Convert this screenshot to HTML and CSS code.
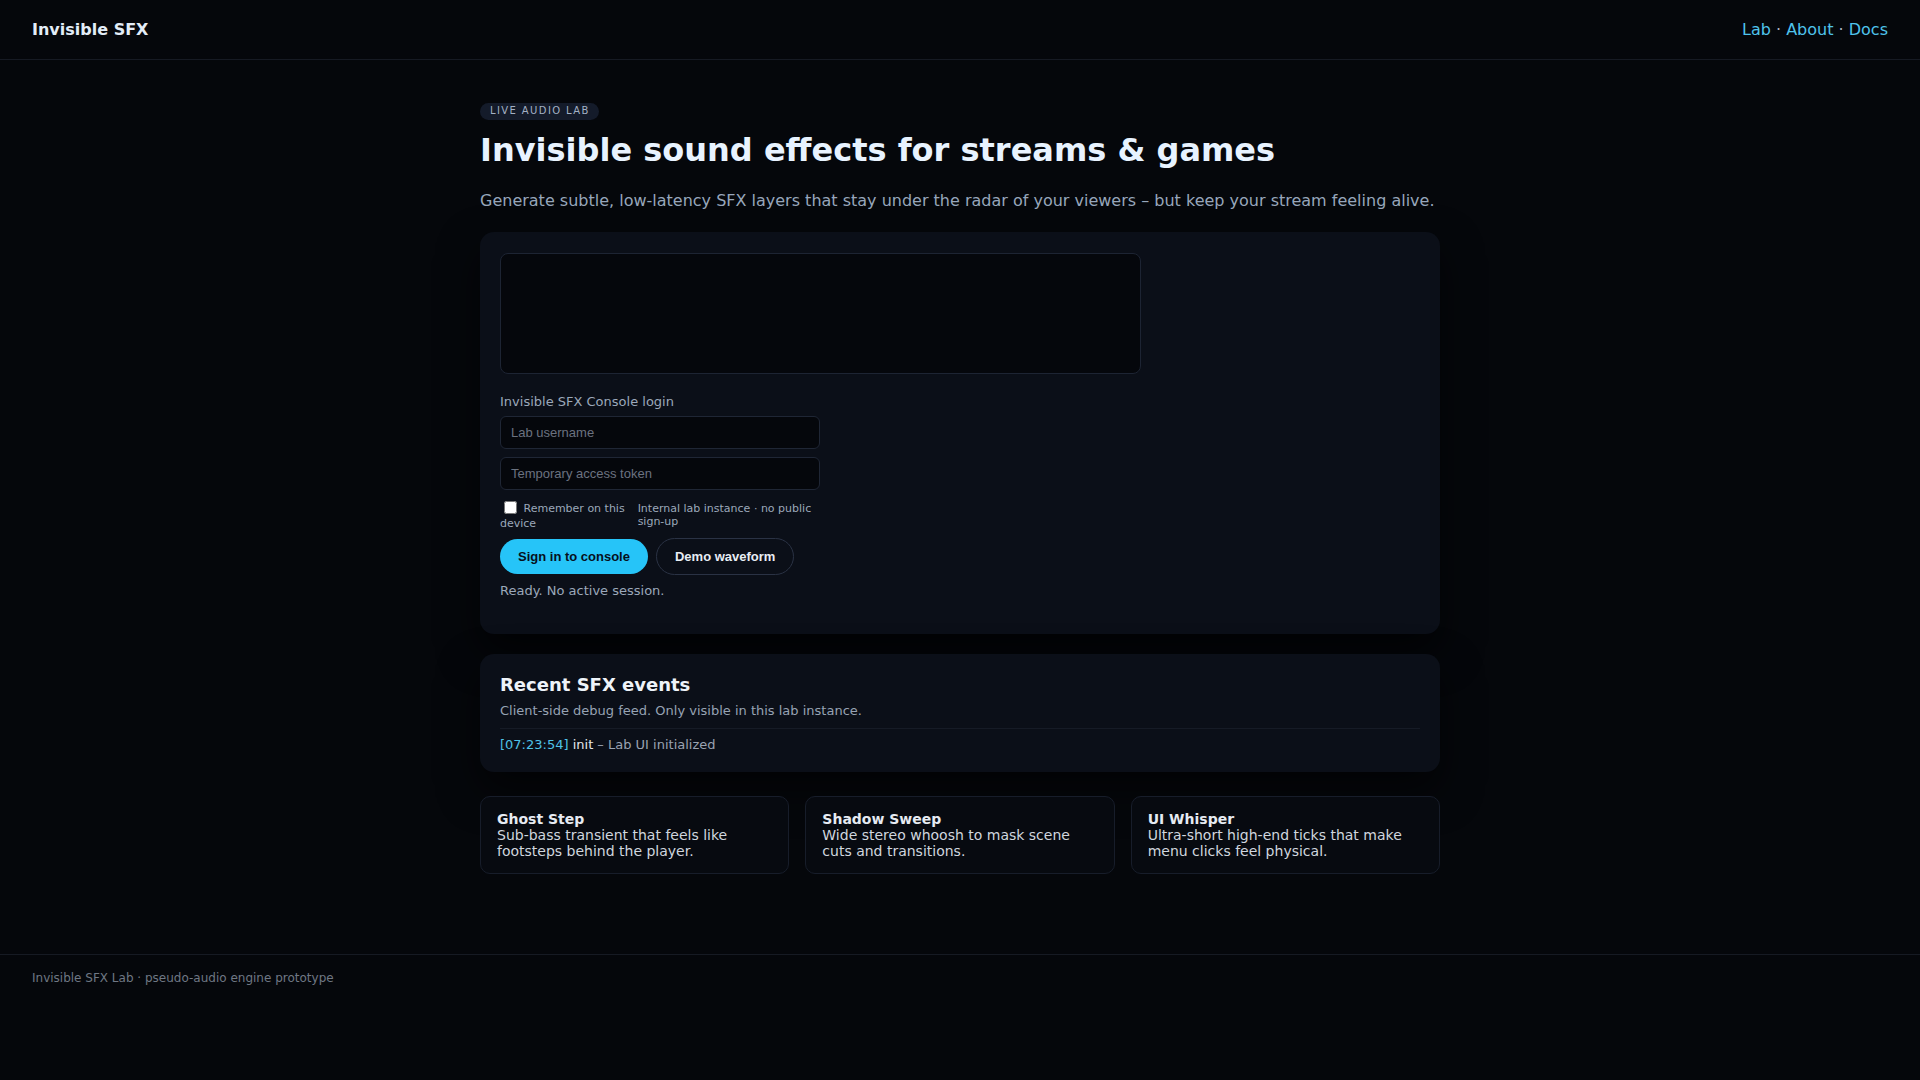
FILE: index.html
```html
<!DOCTYPE html>
<html lang="en">
<head>
<meta charset="utf-8">
<title>Invisible SFX</title>
<link rel="stylesheet" href="styles.css">
</head>
<body>
<header class="topbar">
  <div class="brand">Invisible SFX</div>
  <nav class="nav"><a href="#">Lab</a> · <a href="#">About</a> · <a href="#">Docs</a></nav>
</header>
<main class="page">
  <div class="hero">
    <span class="badge">LIVE AUDIO LAB</span>
    <h1 class="title">Invisible sound effects for streams &amp; games</h1>
    <p class="lead">Generate subtle, low-latency SFX layers that stay under the radar of your viewers – but keep your stream feeling alive.</p>
  </div>
  <section class="panel lab">
    <div class="lab-main">
      <div class="wave"></div>
      <form class="login">
        <div class="login-title">Invisible SFX Console login</div>
        <input class="field" type="text" placeholder="Lab username">
        <input class="field" type="password" placeholder="Temporary access token">
        <div class="login-meta">
          <label class="remember"><input type="checkbox"> Remember on this device</label>
          <span class="note">Internal lab instance · no public sign-up</span>
        </div>
        <div class="actions">
          <button type="button" class="btn primary">Sign in to console</button>
          <button type="button" class="btn ghost">Demo waveform</button>
        </div>
        <div class="status">Ready. No active session.</div>
      </form>
    </div>
  </section>
  <section class="panel events">
    <h2 class="events-title">Recent SFX events</h2>
    <p class="events-sub">Client-side debug feed. Only visible in this lab instance.</p>
    <div class="log">
      <div class="log-line"><span class="ts">[07:23:54]</span> <span class="ev">init</span> – Lab UI initialized</div>
    </div>
  </section>
  <div class="presets">
    <div class="preset"><div class="preset-name">Ghost Step</div><div class="preset-desc">Sub-bass transient that feels like footsteps behind the player.</div></div>
    <div class="preset"><div class="preset-name">Shadow Sweep</div><div class="preset-desc">Wide stereo whoosh to mask scene cuts and transitions.</div></div>
    <div class="preset"><div class="preset-name">UI Whisper</div><div class="preset-desc">Ultra-short high-end ticks that make menu clicks feel physical.</div></div>
  </div>
</main>
<footer class="footer">Invisible SFX Lab · pseudo-audio engine prototype</footer>
</body>
</html>
```
FILE: styles.css
```css
* { box-sizing: border-box; }
html, body { margin: 0; padding: 0; }
body {
  background: #05070b;
  color: #e5e7eb;
  font-family: "DejaVu Sans", sans-serif;
  font-size: 16px;
  min-height: 100vh;
}
.topbar {
  display: flex;
  justify-content: space-between;
  align-items: center;
  padding: 20px 32px;
  border-bottom: 1px solid #161a23;
}
.brand { font-weight: bold; font-size: 16px; color: #e3edf8; }
.nav { font-size: 16px; color: #aab4c2; }
.nav a { color: #4fc3ec; text-decoration: none; }

.page {
  max-width: 960px;
  margin: 0 auto;
  padding: 43px 0 80px;
}
.hero { display: flex; flex-direction: column; align-items: flex-start; }
.badge {
  display: inline-block;
  font-size: 10px;
  line-height: 12px;
  letter-spacing: 1.4px;
  color: #a3b0c4;
  background: #141b2a;
  padding: 2px 9px 3px 10px;
  border-radius: 999px;
  margin-bottom: 11px;
}
.title {
  margin: 0;
  font-size: 32px;
  line-height: 1.2;
  font-weight: bold;
  color: #e8f3ff;
}
.lead {
  margin: 20px 0 19px;
  font-size: 16px;
  line-height: 1.5;
  color: #97a6bb;
}

.panel {
  background: #0b0f18;
  border-radius: 14px;
  padding: 20px;
  box-shadow: 0 18px 40px rgba(0, 0, 0, 0.6);
}
.lab { min-height: 402px; padding-top: 21px; }
.lab-main { width: 641px; }
.wave {
  height: 121px;
  border: 1px solid #1d2433;
  border-radius: 8px;
  background: #05070c;
}
.login {
  width: 320px;
  margin-top: 20px;
  display: flex;
  flex-direction: column;
  align-items: stretch;
}
.login-title {
  font-size: 13px;
  color: #9ba8ba;
  margin-bottom: 7px;
}
.field {
  height: 33px;
  font-family: "Liberation Sans", Arial, sans-serif;
  font-size: 13px;
  color: #e5e7eb;
  background: #05070c;
  border: 1px solid #1f2635;
  border-radius: 6px;
  padding: 0 10px;
  outline: none;
}
.field::placeholder { color: #6b7280; }
.field + .field { margin-top: 8px; }
.login-meta {
  display: flex;
  justify-content: space-between;
  align-items: baseline;
  margin-top: 8px;
  font-size: 11px;
  color: #9ba8ba;
}
.remember input { margin: 3px 3px 3px 4px; vertical-align: -2px; }
.actions {
  display: flex;
  align-items: center;
  gap: 8px;
  margin-top: 8px;
}
.btn {
  font-family: "Liberation Sans", Arial, sans-serif;
  font-size: 13px;
  font-weight: bold;
  padding: 10px 18px;
  border-radius: 999px;
  cursor: pointer;
}
.btn.primary { background: #26c4f8; color: #06101c; border: none; }
.btn.ghost { background: transparent; color: #e8edf4; border: 1px solid #2a3244; }
.status {
  margin-top: 8px;
  font-size: 13px;
  color: #9ba8ba;
}

.events { margin-top: 20px; }
.events-title {
  margin: 0;
  font-size: 18px;
  font-weight: bold;
  color: #eef3f9;
}
.events-sub {
  margin: 8px 0 0;
  font-size: 13px;
  color: #97a3b4;
}
.log {
  margin-top: 10px;
  padding-top: 8px;
  border-top: 1px solid #161b26;
  font-size: 13px;
  color: #9aa3b2;
}
.ts { color: #4fc3e8; }
.ev { color: #e5e7eb; }

.presets {
  display: grid;
  grid-template-columns: repeat(3, 1fr);
  gap: 16px;
  margin-top: 24px;
}
.preset {
  background: #070a10;
  border: 1px solid #171d2a;
  border-radius: 10px;
  padding: 14px 16px 14px;
  font-size: 14px;
}
.preset-name { font-weight: bold; color: #e6ebf2; }
.preset-desc { color: #d0d6df; }

.footer {
  border-top: 1px solid #161a23;
  padding: 16px 32px;
  font-size: 12px;
  color: #6f7784;
}
```
